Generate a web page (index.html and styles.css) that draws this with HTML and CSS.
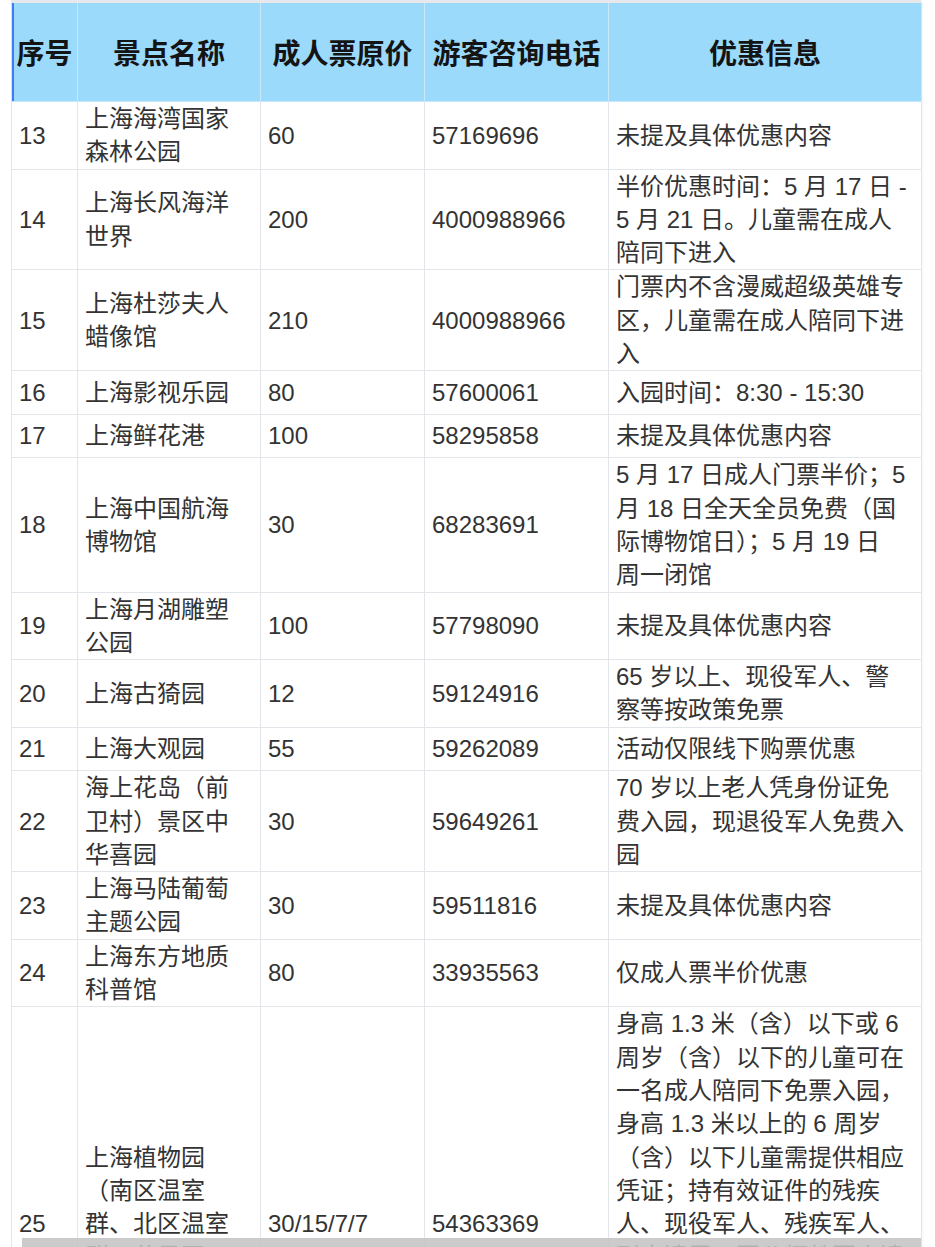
FILE: index.html
```html
<!DOCTYPE html>
<html lang="zh-CN">
<head>
<meta charset="utf-8">
<title>上海景点优惠信息</title>
<link rel="stylesheet" href="styles.css">
</head>
<body>
<div class="sheet">
  <table class="grid">
    <colgroup>
      <col class="c-no">
      <col class="c-name">
      <col class="c-price">
      <col class="c-tel">
      <col class="c-info">
    </colgroup>
    <thead>
      <tr>
        <th class="first">序号</th>
        <th>景点名称</th>
        <th>成人票原价</th>
        <th>游客咨询电话</th>
        <th>优惠信息</th>
      </tr>
    </thead>
    <tbody>
      <tr><td>13</td><td>上海海湾国家<br>森林公园</td><td>60</td><td>57169696</td><td>未提及具体优惠内容</td></tr>
      <tr><td>14</td><td>上海长风海洋<br>世界</td><td>200</td><td>4000988966</td><td>半价优惠时间：5 月 17 日 -<br>5 月 21 日。儿童需在成人<br>陪同下进入</td></tr>
      <tr><td>15</td><td>上海杜莎夫人<br>蜡像馆</td><td>210</td><td>4000988966</td><td>门票内不含漫威超级英雄专<br>区，儿童需在成人陪同下进<br>入</td></tr>
      <tr class="single"><td>16</td><td>上海影视乐园</td><td>80</td><td>57600061</td><td>入园时间：8:30 - 15:30</td></tr>
      <tr class="single"><td>17</td><td>上海鲜花港</td><td>100</td><td>58295858</td><td>未提及具体优惠内容</td></tr>
      <tr><td>18</td><td>上海中国航海<br>博物馆</td><td>30</td><td>68283691</td><td>5 月 17 日成人门票半价；5<br>月 18 日全天全员免费（国<br>际博物馆日）；5 月 19 日<br>周一闭馆</td></tr>
      <tr><td>19</td><td>上海月湖雕塑<br>公园</td><td>100</td><td>57798090</td><td>未提及具体优惠内容</td></tr>
      <tr><td>20</td><td>上海古猗园</td><td>12</td><td>59124916</td><td>65 岁以上、现役军人、警<br>察等按政策免票</td></tr>
      <tr class="single"><td>21</td><td>上海大观园</td><td>55</td><td>59262089</td><td>活动仅限线下购票优惠</td></tr>
      <tr><td>22</td><td>海上花岛（前<br>卫村）景区中<br>华喜园</td><td>30</td><td>59649261</td><td>70 岁以上老人凭身份证免<br>费入园，现退役军人免费入<br>园</td></tr>
      <tr><td>23</td><td>上海马陆葡萄<br>主题公园</td><td>30</td><td>59511816</td><td>未提及具体优惠内容</td></tr>
      <tr><td>24</td><td>上海东方地质<br>科普馆</td><td>80</td><td>33935563</td><td>仅成人票半价优惠</td></tr>
      <tr><td>25</td><td>上海植物园<br>（南区温室<br>群、北区温室<br>群、盆景园、<br>兰室）</td><td>30/15/7/7</td><td>54363369</td><td>身高 1.3 米（含）以下或 6<br>周岁（含）以下的儿童可在<br>一名成人陪同下免票入园，<br>身高 1.3 米以上的 6 周岁<br>（含）以下儿童需提供相应<br>凭证；持有效证件的残疾<br>人、现役军人、残疾军人、<br>烈士遗属、因公牺牲军人遗<br>属、病故军人遗属、消防救<br>援人员、低保家庭等凭有效<br>证件免票入园；60 周岁以<br>上老人凭身份证享受半价优<br>惠</td></tr>
    </tbody>
  </table>
</div>
<div class="hscroll"></div>
</body>
</html>
```

FILE: styles.css
```css
html, body {
  margin: 0;
  padding: 0;
  background: #ffffff;
}

body {
  font-family: "Liberation Sans", "Noto Sans CJK SC", sans-serif;
  color: #333333;
}

.sheet {
  width: 910px;
  margin-left: 11px;
  padding-top: 3px;
  background: #e6e8eb;
  box-shadow: 2px 0 2px rgba(0, 0, 0, 0.04);
}

.grid {
  width: 910px;
  table-layout: fixed;
  border-collapse: collapse;
  background: #ffffff;
}

.c-no { width: 66px; }
.c-name { width: 183px; }
.c-price { width: 164px; }
.c-tel { width: 184px; }
.c-info { width: 313px; }

.grid th {
  height: 98px;
  padding: 0;
  background: #9bdafb;
  color: #141414;
  font-size: 28px;
  font-weight: 700;
  text-align: center;
  vertical-align: middle;
  white-space: nowrap;
  border: 1px solid #c6e8f9;
  border-top: none;
}

.grid th.first {
  box-shadow: inset 2px 0 0 #3d7ded;
}

.grid td {
  padding: 0 7px;
  font-size: 24px;
  line-height: 33.3px;
  color: #333333;
  text-align: left;
  vertical-align: middle;
  white-space: nowrap;
  border: 1px solid #e2e5ea;
}

.grid tr.single td {
  height: 42.5px;
}

.hscroll {
  position: fixed;
  left: 22px;
  width: 899px;
  bottom: 0;
  height: 9px;
  background: rgba(196, 196, 196, 0.88);
}
```
